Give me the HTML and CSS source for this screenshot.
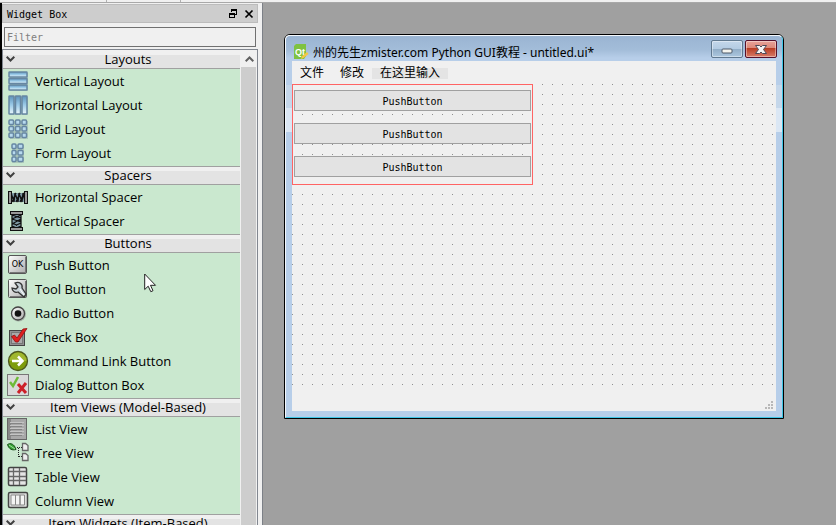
FILE: index.html
```
<!DOCTYPE html>
<html lang="zh-CN">
<head>
    <meta charset="UTF-8">
    <meta name="viewport" content="width=device-width, initial-scale=1.0">
    <title>Qt Designer</title>
    <link rel="stylesheet" href="styles.css">
</head>
<body>
    <!-- Toolbar edge -->
    <div class="toolbar">
        <span class="toolbar-cell first"></span>
        <span class="toolbar-cell second"></span>
    </div>

    <div class="workspace">
        <!-- Widget Box -->
        <aside class="dock">
            <div class="dock-title">
                <span class="dock-name">Widget Box</span>
                <button class="dock-button" aria-label="Float">
                    <svg width="10" height="10" viewBox="0 0 10 10" shape-rendering="crispEdges">
                        <path d="M3 0h6v6H7V5h1V2H4v1H3zM1 4h6v5H1zM2 6v2h4V6z" fill="#000" fill-rule="evenodd"/>
                    </svg>
                </button>
                <button class="dock-button" aria-label="Close">
                    <svg width="10" height="10" viewBox="0 0 10 10">
                        <path d="M1.5 1.5l7 7M8.5 1.5l-7 7" stroke="#000" stroke-width="1.7"/>
                    </svg>
                </button>
            </div>
            <input class="filter" type="text" placeholder="Filter" aria-label="Filter">

            <div class="tree">
                <div class="categories">
                    <button class="category first">
                        <svg class="chevron" width="9" height="6" viewBox="0 0 9 6"><path d="M.7.8L4.5 4.5 8.3.8" fill="none" stroke="#404040" stroke-width="2"/></svg>
                        <span>Layouts</span>
                    </button>
                    <ul class="widgets">
                        <li>
                            <svg width="22" height="22" viewBox="0 0 22 22">
                                <defs>
                                    <linearGradient id="glass" x2="0" y2="1"><stop offset="0" stop-color="#5d93bb"/><stop offset=".5" stop-color="#9ccbe8"/><stop offset="1" stop-color="#e8f5fa"/></linearGradient>
                                    <linearGradient id="steel" x2="1" y2="1"><stop offset="0" stop-color="#fff"/><stop offset="1" stop-color="#aaa"/></linearGradient>
                                </defs>
                                <path d="M3 3h18v18H3z" fill="#8fa9a8" opacity=".5"/>
                                <g fill="url(#glass)" stroke="#6686a3" stroke-width="1.5">
                                    <rect x="2" y="2" width="18" height="5" rx=".5"/><rect x="2" y="8.5" width="18" height="5" rx=".5"/><rect x="2" y="15" width="18" height="5" rx=".5"/>
                                </g>
                            </svg>
                            <span>Vertical Layout</span>
                        </li>
                        <li>
                            <svg width="22" height="22" viewBox="0 0 22 22">
                                <path d="M3 3h18v18H3z" fill="#8fa9a8" opacity=".5"/>
                                <g fill="url(#glass)" stroke="#6686a3" stroke-width="1.5">
                                    <rect x="2" y="2" width="5" height="18" rx=".5"/><rect x="8.5" y="2" width="5" height="18" rx=".5"/><rect x="15" y="2" width="5" height="18" rx=".5"/>
                                </g>
                            </svg>
                            <span>Horizontal Layout</span>
                        </li>
                        <li>
                            <svg width="22" height="22" viewBox="0 0 22 22">
                                <path d="M3 3h18v18H3z" fill="#8fa9a8" opacity=".5"/>
                                <g fill="#b7d9ee" stroke="#6686a3" stroke-width="1.5">
                                    <rect x="2" y="2" width="4.5" height="4.5" rx="1"/><rect x="8.5" y="2" width="4.5" height="4.5" rx="1"/><rect x="15" y="2" width="4.5" height="4.5" rx="1"/>
                                    <rect x="2" y="8.5" width="4.5" height="4.5" rx="1"/><rect x="8.5" y="8.5" width="4.5" height="4.5" rx="1"/><rect x="15" y="8.5" width="4.5" height="4.5" rx="1"/>
                                    <rect x="2" y="15" width="4.5" height="4.5" rx="1"/><rect x="8.5" y="15" width="4.5" height="4.5" rx="1"/><rect x="15" y="15" width="4.5" height="4.5" rx="1"/>
                                </g>
                            </svg>
                            <span>Grid Layout</span>
                        </li>
                        <li>
                            <svg width="22" height="22" viewBox="0 0 22 22">
                                <path d="M5 3h12v18H5z" fill="#8fa9a8" opacity=".5"/>
                                <g fill="#b7d9ee" stroke="#6686a3" stroke-width="1.5">
                                    <rect x="5" y="2" width="4" height="4.5" rx="1"/><rect x="11" y="2" width="5" height="4.5" rx="1"/>
                                    <rect x="5" y="8.5" width="4" height="4.5" rx="1"/><rect x="11" y="8.5" width="5" height="4.5" rx="1"/>
                                    <rect x="5" y="15" width="4" height="4.5" rx="1"/><rect x="11" y="15" width="5" height="4.5" rx="1"/>
                                </g>
                            </svg>
                            <span>Form Layout</span>
                        </li>
                    </ul>

                    <button class="category">
                        <svg class="chevron" width="9" height="6" viewBox="0 0 9 6"><path d="M.7.8L4.5 4.5 8.3.8" fill="none" stroke="#404040" stroke-width="2"/></svg>
                        <span>Spacers</span>
                    </button>
                    <ul class="widgets">
                        <li>
                            <svg width="22" height="22" viewBox="0 0 22 22">
                                <path d="M4 7h14v9H4z" fill="#7f9aa6"/>
                                <path d="M4 7l3 9 1-9 3 9 1-9 3 9 1-9 2 8M5 16l4-9M9 16l4-9M13 16l4-9" fill="none" stroke="#111" stroke-width="1.3"/>
                                <rect x="1.5" y="5.5" width="3" height="12" fill="#999" stroke="#111"/>
                                <rect x="17.5" y="5.5" width="3" height="12" fill="#999" stroke="#111"/>
                            </svg>
                            <span>Horizontal Spacer</span>
                        </li>
                        <li>
                            <svg width="22" height="22" viewBox="0 0 22 22">
                                <path d="M5 4h9v14H5z" fill="#7f9aa6"/>
                                <path d="M5 5l9 3M5 9l9 3M5 13l9 4M14 5l-9 4M14 9l-9 5M14 13l-9 4M5 4v14M14 4v14" fill="none" stroke="#111" stroke-width="1.3"/>
                                <rect x="3.5" y="1.5" width="12" height="3" fill="#999" stroke="#111"/>
                                <rect x="3.5" y="17.5" width="12" height="3" fill="#999" stroke="#111"/>
                            </svg>
                            <span>Vertical Spacer</span>
                        </li>
                    </ul>

                    <button class="category">
                        <svg class="chevron" width="9" height="6" viewBox="0 0 9 6"><path d="M.7.8L4.5 4.5 8.3.8" fill="none" stroke="#404040" stroke-width="2"/></svg>
                        <span>Buttons</span>
                    </button>
                    <ul class="widgets">
                        <li>
                            <svg width="22" height="22" viewBox="0 0 22 22">
                                <rect x="1.5" y="1.5" width="18" height="18" rx="1.5" fill="url(#steel)" stroke="#555"/>
                                <path d="M3 18.5h15.500V3" fill="none" stroke="#777"/>
                                <text class="icon-text" x="10.500" y="13" text-anchor="middle">OK</text>
                            </svg>
                            <span>Push Button</span>
                        </li>
                        <li>
                            <svg width="22" height="22" viewBox="0 0 22 22">
                                <rect x="1.5" y="1.5" width="18" height="18" rx="1" fill="url(#steel)" stroke="#555"/>
                                <path d="M3 18.5h15.500V3" fill="none" stroke="#777"/>
                                <path d="M8 5c4-2 8 1 7 5l4 6-2 3-6-5c-3 1-6-1-6-4l4 1 2-2z" fill="#c8d2d8" stroke="#333" stroke-width="1.3"/>
                                <path d="M13 11l4 6" stroke="#fff"/>
                            </svg>
                            <span>Tool Button</span>
                        </li>
                        <li>
                            <svg width="22" height="22" viewBox="0 0 22 22">
                                <circle cx="11.5" cy="12" r="7.5" fill="#888" opacity=".6"/>
                                <circle cx="11" cy="11.5" r="6.5" fill="url(#steel)" stroke="#444" stroke-width="1.3"/>
                                <circle cx="11" cy="11.5" r="3.3" fill="#111"/>
                            </svg>
                            <span>Radio Button</span>
                        </li>
                        <li>
                            <svg width="22" height="22" viewBox="0 0 22 22">
                                <rect x="2.5" y="4.5" width="15" height="15" fill="#929292" stroke="#444"/>
                                <rect x="4.5" y="6.5" width="11" height="11" fill="#aaa" stroke="#777"/>
                                <path d="M4.500 10.500l3-1.500 2.500 3 6-9 4-.5-9 13.500h-2.500z" fill="#df2020" stroke="#8e1010" stroke-width=".8"/>
                            </svg>
                            <span>Check Box</span>
                        </li>
                        <li>
                            <svg width="22" height="22" viewBox="0 0 22 22">
                                <circle cx="11" cy="11" r="9.5" fill="#7e9c0c" stroke="#4e5820" stroke-width="1.3"/>
                                <path d="M2.5 11a8.500 8.500 0 0 1 17 0z" fill="#a0b72e"/>
                                <path d="M5 11h10M11 6.5l4.500 4.500-4.500 4.500" fill="none" stroke="#fff" stroke-width="2.5"/>
                            </svg>
                            <span>Command Link Button</span>
                        </li>
                        <li>
                            <svg width="22" height="22" viewBox="0 0 22 22">
                                <rect x=".5" y=".5" width="21" height="21" fill="#d9d9d9" stroke="#777"/>
                                <path d="M3 8l3 4 5-9" fill="none" stroke="#6dbb37" stroke-width="2.5"/>
                                <path d="M11 10l8 9M19 9l-8 10" fill="none" stroke="#cd2028" stroke-width="3"/>
                            </svg>
                            <span>Dialog Button Box</span>
                        </li>
                    </ul>

                    <button class="category">
                        <svg class="chevron" width="9" height="6" viewBox="0 0 9 6"><path d="M.7.8L4.5 4.5 8.3.8" fill="none" stroke="#404040" stroke-width="2"/></svg>
                        <span>Item Views (Model-Based)</span>
                    </button>
                    <ul class="widgets">
                        <li>
                            <svg width="22" height="22" viewBox="0 0 22 22">
                                <rect x=".5" y=".5" width="19" height="21" fill="#a8a8a8" stroke="#666"/>
                                <path d="M1 1h3v20H1z" fill="#888"/>
                                <path d="M3 4.5h14M3 7.5h14M3 10.500h14M3 13.500h14M3 16.500h14" stroke="#c4c4c4"/>
                                <path d="M3 5.5h12M3 8.5h12M3 11.500h12M3 14.500h12M3 17.500h12" stroke="#858585"/>
                            </svg>
                            <span>List View</span>
                        </li>
                        <li>
                            <svg width="22" height="22" viewBox="0 0 22 22">
                                <path d="M.5 2.500c3-2 7-.5 8.500 5-3.500 1-7 0-8.500-5z" fill="#35a435" stroke="#164c16"/>
                                <path d="M2 3l6 4" stroke="#a7dfa0"/>
                                <path d="M10 5.5h5M11.500 6v9M12 14.500h3" fill="none" stroke="#222" stroke-dasharray="1 1"/>
                                <path d="M15.500 1.500h3l2.500 2v5h-5.500zM15.500 11.500h3l2.500 2v5h-5.500z" fill="#eee" stroke="#666" stroke-width="1.3"/>
                            </svg>
                            <span>Tree View</span>
                        </li>
                        <li>
                            <svg width="22" height="22" viewBox="0 0 22 22">
                                <rect x="1.5" y="1.5" width="18" height="18" rx="1.5" fill="#e4e4e4" stroke="#444" stroke-width="1.5"/>
                                <path d="M2 5.5h17M2 10.500h17M2 14.500h17M6.500 2v17M12.500 2v17" stroke="#666" stroke-width="1.3"/>
                            </svg>
                            <span>Table View</span>
                        </li>
                        <li>
                            <svg width="22" height="22" viewBox="0 0 22 22">
                                <rect x="1.5" y="2.5" width="19" height="15" rx="1.5" fill="#ddd" stroke="#444" stroke-width="1.5"/>
                                <path d="M4 5h4.500v10H4zM8.500 5H13v10H8.500zM13 5h4.500v10H13z" fill="#f4f4f4" stroke="#888"/>
                            </svg>
                            <span>Column View</span>
                        </li>
                    </ul>

                    <button class="category">
                        <svg class="chevron" width="9" height="6" viewBox="0 0 9 6"><path d="M.7.8L4.5 4.5 8.3.8" fill="none" stroke="#404040" stroke-width="2"/></svg>
                        <span>Item Widgets (Item-Based)</span>
                    </button>
                </div>
                <div class="scrollbar">
                    <div class="scroll-up">
                        <svg width="9" height="6" viewBox="0 0 9 6"><path d="M.7 5.200L4.5 1.5l3.800 3.700" fill="none" stroke="#606060" stroke-width="2"/></svg>
                    </div>
                    <div class="scroll-thumb"></div>
                </div>
            </div>
        </aside>

        <!-- Form editor -->
        <main class="mdi">
            <section class="form-window">
                <div class="form-inner">
                    <header class="titlebar">
                        <svg class="logo" width="15" height="16" viewBox="0 0 15 16">
                            <path d="M2 0h10v12l-2 3H0V2z" fill="#7fc241"/>
                            <text class="logo-text" x="6" y="11" text-anchor="middle">Qt</text>
                            <path d="M7 15l1-3 5-4 1.500 2-5 4z" fill="#f4c744"/>
                        </svg>
                        <h1>州的先生zmister.com Python GUI教程 - untitled.ui*</h1>
                        <button class="window-button minimize" aria-label="Minimize">
                            <svg width="12" height="6" viewBox="0 0 12 6"><rect x="1" y="1" width="10" height="4" rx="1" fill="#f4f4ee" stroke="#4d5868"/></svg>
                        </button>
                        <button class="window-button close" aria-label="Close">
                            <svg width="14" height="11" viewBox="0 0 14 11"><path d="M1.500 1.500h4L7 3l1.500-1.500h4L9.500 5.500l3 4h-4L7 8 5.500 9.500h-4l3-4z" fill="#f4f4f4" stroke="#4d4a58"/></svg>
                        </button>
                    </header>
                    <div class="form-body">
                        <nav class="menubar">
                            <button>文件</button>
                            <button>修改</button>
                            <button class="placeholder">在这里输入</button>
                        </nav>
                        <div class="canvas">
                            <div class="vertical-layout">
                                <button>PushButton</button>
                                <button>PushButton</button>
                                <button>PushButton</button>
                            </div>
                        </div>
                        <footer class="statusbar">
                            <svg width="8" height="8" viewBox="0 0 8 8"><path d="M6 0h2v2H6zM3 3h2v2H3zM6 3h2v2H6zM0 6h2v2H0zM3 6h2v2H3zM6 6h2v2H6z" fill="#b8b8b8"/></svg>
                        </footer>
                    </div>
                </div>
            </section>
        </main>
    </div>

    <svg class="cursor" width="13" height="20" viewBox="0 0 13 20">
        <path d="M.7 1v15.500l3.500-3.300 2.600 5.500 2.200-1-2.500-5.400h5z" fill="#fff" stroke="#222"/>
    </svg>
</body>
</html>
```
FILE: styles.css
```
* {
    box-sizing: border-box;
}
body {
    margin: 0;
    height: 100vh;
    display: flex;
    flex-direction: column;
    overflow: hidden;
    background-color: #f0f0f0;
    font-family: "Open Sans", "Noto Sans CJK SC", sans-serif;
    font-size: 13px;
    color: #000;
}
button {
    margin: 0;
    padding: 0;
    border: none;
    background: none;
    font: inherit;
    color: inherit;
}
svg {
    display: block;
    flex: none;
}

/* Toolbar */
.toolbar {
    display: flex;
    flex: none;
    height: 3px;
    border-bottom: 1px solid #a8a8a8;
}
.toolbar-cell {
    border-right: 1px solid #b0b0b0;
}
.toolbar-cell.first {
    width: 107px;
}
.toolbar-cell.second {
    width: 74px;
}
.workspace {
    display: flex;
    flex: 1;
    min-height: 0;
}

/* Widget box */
.dock {
    display: flex;
    flex-direction: column;
    flex: none;
    width: 262px;
    padding: 1px 4px 0 0;
    border-left: 2px solid #000;
}
.dock-title {
    display: flex;
    align-items: center;
    gap: 6px;
    flex: none;
    height: 19px;
    padding: 0 3px 0 4px;
    background-color: #cdcdcd;
    border: 1px solid #bcbcbc;
    font-family: "DejaVu Sans Mono", monospace;
    font-size: 10px;
}
.dock-name {
    flex: 1;
    padding-top: 1px;
}
.filter {
    flex: none;
    height: 20px;
    margin: 4px 2px 2px;
    padding: 1px 2px 0;
    border: 1px solid #707070;
    border-radius: 0;
    background-color: #f0f0f0;
    font-family: "DejaVu Sans Mono", monospace;
    font-size: 10px;
}
.filter::placeholder {
    color: #808080;
}
.tree {
    display: flex;
    flex: 1;
    min-height: 0;
    border: 1px solid #828790;
    border-bottom: none;
}
.categories {
    flex: 1;
    overflow: hidden;
    background-color: #cae8cf;
}
.category {
    display: flex;
    align-items: center;
    width: 100%;
    height: 19px;
    padding-left: 3px;
    border-top: 1px solid #a0a0a0;
    border-bottom: 1px solid #a0a0a0;
    background: linear-gradient(#f0f0f0 4px, #e3e3e3 4px);
    line-height: 17px;
}
.category.first {
    border-top-color: #f0f0f0;
}
.category span {
    flex: 1;
    padding-left: 1px;
    text-align: center;
}
.chevron {
    margin-bottom: 2px;
}
.widgets {
    margin: 0;
    padding: 0 0 1px 4px;
    list-style: none;
}
.widgets li {
    display: flex;
    align-items: center;
    gap: 6px;
    height: 24px;
    line-height: 24px;
}
.icon-text {
    font-family: "DejaVu Sans", sans-serif;
    font-size: 8px;
}
.scrollbar {
    flex: none;
    width: 17px;
    padding-left: 1px;
    background-color: #f0f0f0;
    display: flex;
    flex-direction: column;
}
.scroll-up {
    display: flex;
    align-items: center;
    justify-content: center;
    height: 17px;
}
.scroll-thumb {
    flex: 1;
    margin-right: 1px;
    background-color: #cdcdcd;
}

/* Form window */
.mdi {
    position: relative;
    flex: 1;
    border-left: 1px solid #7c8087;
    background-color: #a0a0a0;
    overflow: hidden;
}
.form-window {
    position: absolute;
    top: 31px;
    left: 21px;
    width: 500px;
    border: 1px solid #000;
    border-radius: 6px 6px 0 0;
    background-color: #fff;
}
.form-inner {
    padding: 0 6px 6px;
    border: 1px solid;
    border-color: #f4f8fc #3fc6e6 #3fc6e6 #f4f8fc;
    border-radius: 5px 5px 0 0;
    background: linear-gradient(#9ab4d2, #a3bdd9 14px, #b7cee9 22px, #b7cee9 49px, #c5d7ea 49px, #c5d7ea 72px, #dbe7f4 72px, #dbe7f4 96px, #b7cee9 96px);
}
.titlebar {
    display: flex;
    gap: 2px;
    height: 25px;
    margin-right: -1px;
}
.logo {
    margin: 8px 2px 0;
}
.logo-text {
    fill: #fff;
    font-family: "Liberation Sans", sans-serif;
    font-size: 9px;
    font-weight: bold;
}
.titlebar h1 {
    flex: 1;
    margin: 7px 0 0;
    font-family: "Noto Sans", "Noto Sans CJK SC", sans-serif;
    font-size: 12px;
    font-weight: normal;
    line-height: 20px;
}
.window-button {
    display: flex;
    align-items: center;
    justify-content: center;
    width: 32px;
    height: 18px;
    margin-top: 4px;
    border: 1px solid #60788f;
    border-radius: 2px;
    box-shadow: inset 0 0 0 1px rgba(255, 255, 255, 0.4);
}
.minimize {
    padding-top: 4px;
    background: linear-gradient(#c4d7ea, #b3cbe2 50%, #91adc7 50%, #acc7df);
}
.close {
    border-color: #56102a;
    background: linear-gradient(#e8a399, #dc8777 45%, #b83c22 45%, #d87b68);
}
.form-body {
    background-color: #f0f0f0;
}
.menubar {
    display: flex;
    height: 23px;
    font-size: 12px;
}
.menubar button {
    padding: 0 8px;
    line-height: 23px;
}
.menubar .placeholder {
    background: linear-gradient(#e4e4e4, #e4e4e4) 0 7px / 100% 11px no-repeat;
}
.canvas {
    height: 305px;
    background: conic-gradient(from 0deg at 1px 1px, transparent 270deg, #909090 270deg) 0 0 / 10px 10px;
}
.vertical-layout {
    display: flex;
    flex-direction: column;
    gap: 12px;
    width: 241px;
    padding: 5px 1px 7px;
    border: 1px solid #ff6464;
}
.vertical-layout button {
    height: 21px;
    padding-top: 1px;
    border: 1px solid #a0a0a0;
    background-color: #e3e3e3;
    font-family: "DejaVu Sans Mono", monospace;
    font-size: 10px;
}
.statusbar {
    display: flex;
    align-items: flex-end;
    justify-content: flex-end;
    height: 22px;
    padding: 0 3px 2px 0;
}

/* Mouse pointer */
.cursor {
    position: absolute;
    top: 273px;
    left: 144px;
}
```
